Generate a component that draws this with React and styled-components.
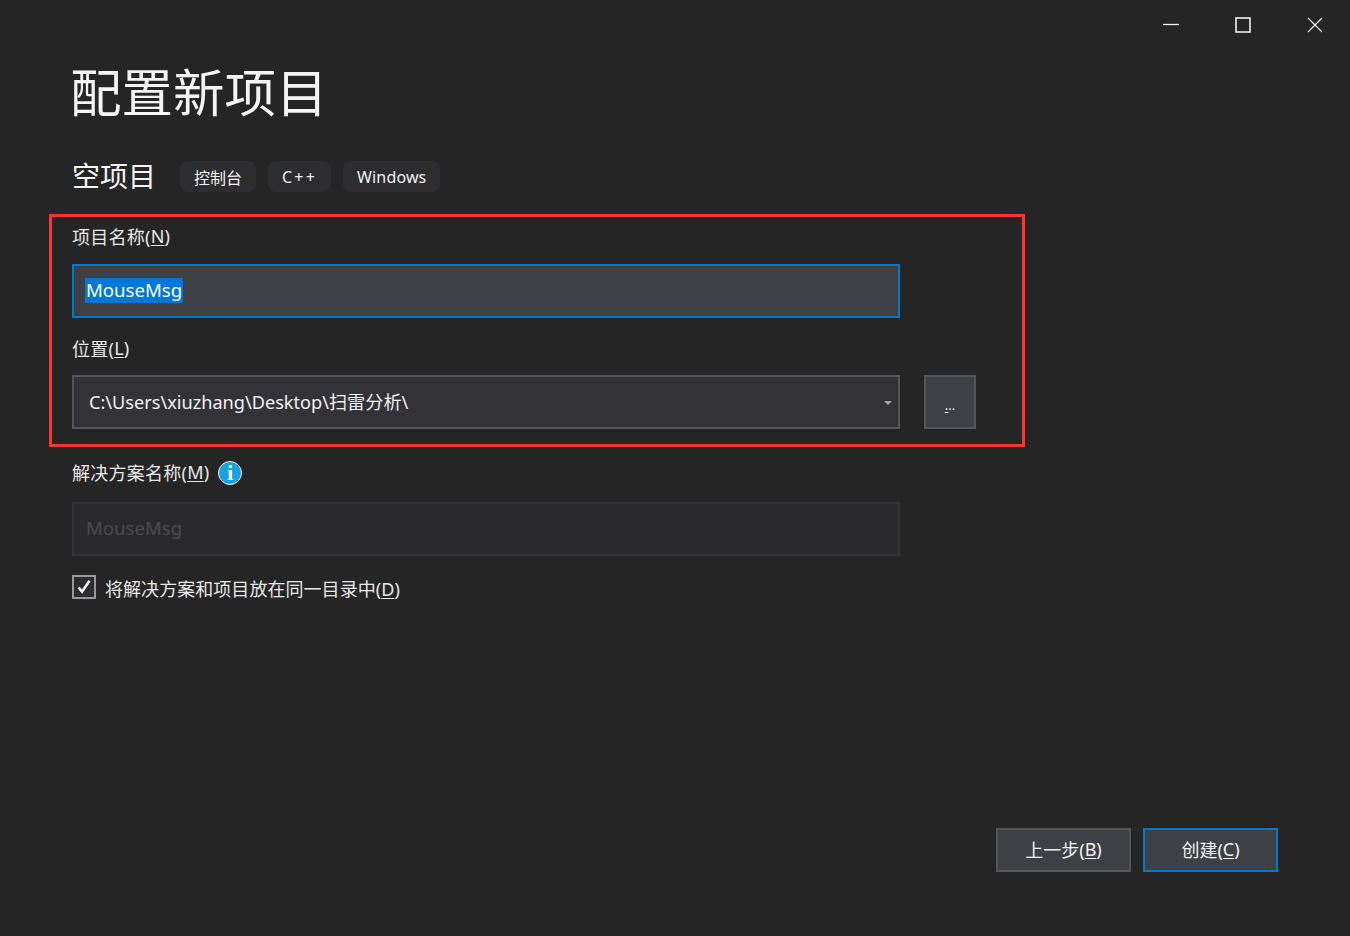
import React from 'react';
import styled, { createGlobalStyle } from 'styled-components';

const GlobalStyle = createGlobalStyle`
  html, body {
    margin: 0;
    background: #252526;
    color: #f1f1f1;
    font-family: "Noto Sans", "Noto Sans CJK SC", sans-serif;
  }
`;

const Page = styled.div`
  position: relative;
  width: 1350px;
  height: 936px;
  overflow: hidden;
  box-sizing: border-box;
  padding: 0 72px;
  display: flex;
  flex-direction: column;
`;

const WindowBar = styled.div`
  position: absolute;
  top: 0;
  right: 0;
  display: flex;
`;

const WindowButton = styled.div`
  width: 72px;
  height: 50px;
  box-sizing: border-box;
  padding-left: 2px;
  display: flex;
  align-items: center;
  justify-content: center;
`;

const Title = styled.h1`
  margin: 59px 0 0 -2px;
  height: 66px;
  line-height: 66px;
  font-size: 51.5px;
  font-weight: 400;
  color: #f4f4f4;
`;

const SubRow = styled.div`
  margin-top: 36px;
  height: 31px;
  display: flex;
  align-items: center;
  gap: 12px;
`;

const SubTitle = styled.div`
  font-size: 28px;
  line-height: 31px;
  width: 96px;
  color: #f4f4f4;
`;

const Tag = styled.div`
  height: 31px;
  box-sizing: border-box;
  padding: 0 14px;
  display: flex;
  align-items: center;
  border-radius: 8px;
  background: #2d2d30;
  font-size: 16px;
  letter-spacing: ${p => p.$spacing || 0}px;
  color: #f1f1f1;
`;

const Label = styled.div`
  display: flex;
  align-items: center;
  height: 26px;
  box-sizing: border-box;
  padding-bottom: 2px;
  margin-top: ${p => p.$top}px;
  font-size: 18px;
  color: #e8e8e8;
  letter-spacing: 0.25px;
`;

const Key = styled.span`
  text-decoration: underline;
  text-underline-offset: 2px;
  text-decoration-thickness: 1px;
`;

const InfoBadge = styled.span`
  width: 24px;
  height: 24px;
  margin-left: 9px;
  margin-top: 2px;
  border-radius: 50%;
  border: 1px solid #f1f1f1;
  box-sizing: border-box;
  background: #1ba1e2;
  display: flex;
  align-items: center;
  justify-content: center;
  font-family: "Liberation Serif", serif;
  font-weight: 700;
  font-size: 21px;
  color: #fff;
`;

const Field = styled.div`
  width: 828px;
  height: 54px;
  box-sizing: border-box;
  margin-top: ${p => p.$top}px;
  padding-left: 12px;
  padding-bottom: 3px;
  display: flex;
  align-items: center;
  font-size: 18.6px;
  border: 2px solid ${p => p.$border};
  background: ${p => p.$bg};
  color: ${p => p.$color};
`;

const Selected = styled.span`
  background: #0078d7;
  color: #fff;
  height: 25px;
  line-height: 24px;
  padding: 0 1px;
  margin-left: -1px;
  margin-top: 1px;
`;

const LocationRow = styled.div`
  display: flex;
  gap: 24px;
  margin-top: 13px;
`;

const LocationField = styled(Field)`
  margin-top: 0;
  padding-left: 15px;
  padding-right: 6px;
  padding-bottom: 2px;
  justify-content: space-between;
  font-size: 18.15px;
`;

const Caret = styled.span`
  width: 0;
  height: 0;
  margin-top: 4px;
  border-left: 4.5px solid transparent;
  border-right: 4.5px solid transparent;
  border-top: 4.5px solid #a0a0a0;
`;

const BrowseButton = styled.div`
  width: 52px;
  height: 54px;
  box-sizing: border-box;
  border: 2px solid #555555;
  background: #3f3f46;
  display: flex;
  align-items: center;
  justify-content: center;
  padding-top: 7px;
  font-size: 13px;
  line-height: 1;
  color: #f1f1f1;
`;

const CheckRow = styled.div`
  display: flex;
  align-items: center;
  margin-top: 19px;
  gap: 9px;
  height: 24px;
  font-size: 18px;
  letter-spacing: 0.05px;
  color: #e8e8e8;
`;

const CheckText = styled.span`
  padding-top: 1px;
`;

const CheckBox = styled.span`
  width: 24px;
  height: 24px;
  box-sizing: border-box;
  border: 2px solid #999999;
  background: #2d2d30;
  display: flex;
  align-items: center;
  justify-content: center;
`;

const Footer = styled.div`
  display: flex;
  justify-content: flex-end;
  gap: 12px;
  margin-top: auto;
  margin-bottom: 64px;
`;

const FooterButton = styled.div`
  width: 135px;
  height: 44px;
  box-sizing: border-box;
  padding-bottom: 2px;
  border: 2px solid ${p => (p.$primary ? '#007acc' : '#555555')};
  background: #3f3f46;
  display: flex;
  align-items: center;
  justify-content: center;
  font-size: 18px;
  color: #f1f1f1;
`;

const RedFrame = styled.div`
  position: absolute;
  left: 49px;
  top: 214px;
  width: 976px;
  height: 233px;
  box-sizing: border-box;
  border: 3px solid #ff3333;
  pointer-events: none;
`;

export default function App() {
  return (
    <Page>
      <GlobalStyle />
      <WindowBar>
        <WindowButton>
          <svg width="16" height="16" viewBox="0 0 16 16"><path d="M0 7.5h16" stroke="#f1f1f1" strokeWidth="1.3" /></svg>
        </WindowButton>
        <WindowButton>
          <svg width="16" height="16" viewBox="0 0 16 16"><rect x="1" y="1" width="14" height="14" fill="none" stroke="#f1f1f1" strokeWidth="1.6" /></svg>
        </WindowButton>
        <WindowButton>
          <svg width="16" height="16" viewBox="0 0 16 16"><path d="M1 1l14 14M15 1L1 15" stroke="#f1f1f1" strokeWidth="1.2" /></svg>
        </WindowButton>
      </WindowBar>

      <Title>配置新项目</Title>
      <SubRow>
        <SubTitle>空项目</SubTitle>
        <Tag>控制台</Tag>
        <Tag $spacing={2.2}>C++</Tag>
        <Tag $spacing={0.15}>Windows</Tag>
      </SubRow>

      <Label $top={32}>项目名称(<Key>N</Key>)</Label>
      <Field $top={14} $border="#007acc" $bg="#3f3f46" $color="#fff">
        <Selected>MouseMsg</Selected>
      </Field>

      <Label $top={18}>位置(<Key>L</Key>)</Label>
      <LocationRow>
        <LocationField $border="#555555" $bg="#333337" $color="#f1f1f1">
          C:\Users\xiuzhang\Desktop\扫雷分析\
          <Caret />
        </LocationField>
        <BrowseButton><Key>.</Key>..</BrowseButton>
      </LocationRow>

      <Label $top={31}>
        解决方案名称(<Key>M</Key>)
        <InfoBadge>i</InfoBadge>
      </Label>
      <Field $top={16} $border="#333337" $bg="#2a2a2c" $color="#4a4a4c">MouseMsg</Field>

      <CheckRow>
        <CheckBox>
          <svg width="16" height="16" viewBox="0 0 16 16"><path d="M2.5 8.5l3.6 4.2L13.5 1.8" fill="none" stroke="#fff" strokeWidth="2.6" /></svg>
        </CheckBox>
        <CheckText>将解决方案和项目放在同一目录中(<Key>D</Key>)</CheckText>
      </CheckRow>

      <Footer>
        <FooterButton>上一步(<Key>B</Key>)</FooterButton>
        <FooterButton $primary>创建(<Key>C</Key>)</FooterButton>
      </Footer>

      <RedFrame />
    </Page>
  );
}
